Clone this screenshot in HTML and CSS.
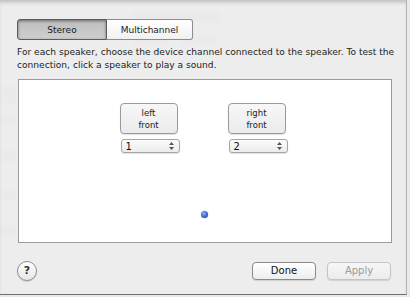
FILE: index.html
```html
<!DOCTYPE html>
<html>
<head>
<meta charset="utf-8">
<link rel="stylesheet" href="styles.css">
</head>
<body>
<div class="window">
  <div class="backdrop" aria-hidden="true">
    <div class="bd bd-title"></div>
    <div class="bd bd-sub"></div>
    <div class="bd bd-sub2"></div>
    <div class="bd bd-left1"></div>
    <div class="bd bd-left2"></div>
    <div class="bd bd-left3"></div>
    <div class="bd bd-left4"></div>
    <div class="bd bd-band"></div>
  </div>
  <div class="sheet">
    <div class="tabs">
      <button class="seg seg-on">Stereo</button>
      <button class="seg">Multichannel</button>
    </div>
    <p class="desc">For each speaker, choose the device channel connected to the speaker. To test the connection, click a speaker to play a sound.</p>
    <div class="panel">
      <div class="speakers">
        <div class="speaker">
          <button class="spk-btn">left<br>front</button>
          <div class="popup"><span>1</span><svg class="arrows" width="5" height="8" viewBox="0 0 5 8"><polygon points="0,3 2.5,0 5,3"/><polygon points="0,5 2.5,8 5,5"/></svg></div>
        </div>
        <div class="speaker">
          <button class="spk-btn">right<br>front</button>
          <div class="popup"><span>2</span><svg class="arrows" width="5" height="8" viewBox="0 0 5 8"><polygon points="0,3 2.5,0 5,3"/><polygon points="0,5 2.5,8 5,5"/></svg></div>
        </div>
      </div>
      <div class="listener"></div>
    </div>
    <div class="footer">
      <button class="help">?</button>
      <div class="actions">
        <button class="btn">Done</button>
        <button class="btn btn-off">Apply</button>
      </div>
    </div>
  </div>
</div>
</body>
</html>
```
FILE: styles.css
```css
* { box-sizing: border-box; }
html, body { margin: 0; padding: 0; }
body {
  width: 410px;
  height: 297px;
  background: #e4e4e4;
  font-family: "DejaVu Sans", Verdana, sans-serif;
  color: #1a1a1a;
  overflow: hidden;
}
.window {
  position: relative;
  width: 410px;
  height: 297px;
  background: #e9e9e9;
}
.backdrop {
  position: absolute;
  inset: 0;
  filter: blur(2px);
  pointer-events: none;
}
.bd { position: absolute; background: rgba(0,0,0,0.07); border-radius: 3px; }
.bd-title { left: 132px; top: 12px; width: 88px; height: 10px; }
.bd-sub { left: 132px; top: 36px; width: 38px; height: 8px; background: rgba(0,0,0,0.05); }
.bd-sub2 { left: 180px; top: 36px; width: 38px; height: 8px; background: rgba(0,0,0,0.05); }
.bd-left1 { left: 0; top: 115px; width: 16px; height: 9px; }
.bd-left2 { left: 0; top: 152px; width: 16px; height: 9px; }
.bd-left3 { left: 0; top: 190px; width: 16px; height: 9px; }
.bd-left4 { left: 0; top: 226px; width: 16px; height: 9px; }
.bd-band { left: 0; top: 86px; width: 18px; height: 18px; background: rgba(0,0,0,0.05); border-radius: 0; }
.sheet {
  position: relative;
  width: 407px;
  height: 295px;
  background: rgba(238,238,238,0.8);
  border-right: 1px solid #b4b4b4;
  border-bottom: 1px solid #6e6e6e;
  box-shadow: inset 0 4px 4px -2px rgba(0,0,0,0.22);
  display: flex;
  flex-direction: column;
  padding: 19px 0 0 17px;
}
.tabs {
  display: flex;
  height: 21px;
}
button {
  font-family: inherit;
  color: inherit;
  margin: 0;
}
.seg {
  height: 21px;
  font-size: 9px;
  border: 1px solid #8c8c8c;
  background: linear-gradient(#ffffff, #f1f1f1);
  padding: 0;
}
.seg:first-child { width: 90px; border-radius: 3px 0 0 3px; }
.seg:last-child { width: 86px; border-left: none; border-radius: 0 3px 3px 0; }
.seg-on {
  background: linear-gradient(#bdbdbd, #cfcfcf);
  border-color: #5c5c5c;
  box-shadow: inset 0 1px 3px rgba(0,0,0,0.45);
}
.desc {
  margin: 6px 0 0 0;
  width: 385px;
  font-size: 9.1px;
  line-height: 12.5px;
  color: #222;
}
.panel {
  margin-top: 8px;
  margin-left: 1px;
  width: 374px;
  height: 164px;
  background: #ffffff;
  border: 1px solid #9c9c9c;
  display: flex;
  flex-direction: column;
  align-items: center;
  padding-top: 23px;
}
.speakers {
  display: flex;
  gap: 48px;
  margin-left: -3px;
}
.speaker {
  display: flex;
  flex-direction: column;
  gap: 5px;
}
.spk-btn {
  width: 58px;
  height: 31px;
  border: 1px solid #9a9a9a;
  border-radius: 4px;
  background: linear-gradient(#f7f7f7, #ebebeb);
  box-shadow: 0 1px 1px rgba(0,0,0,0.12);
  font-size: 8.5px;
  line-height: 12px;
  padding: 0;
  color: #222;
}
.popup {
  width: 59px;
  height: 14px;
  margin-left: 1px;
  border: 1px solid #a5a5a5;
  border-radius: 3px;
  background: linear-gradient(#fbfbfb, #ececec);
  box-shadow: 0 1px 1px rgba(0,0,0,0.12);
  display: flex;
  align-items: center;
  justify-content: space-between;
  padding: 0 5px 0 4px;
  font-size: 10px;
  color: #111;
}
.arrows { fill: #555; }
.listener {
  margin-top: 58px;
  width: 7px;
  height: 7px;
  border-radius: 50%;
  background: radial-gradient(circle at 40% 35%, #8fb0f0, #2c5fc9 60%, #1b3f98);
  box-shadow: 0 0 1px rgba(20,40,120,0.6);
  margin-left: -1px;
}
.footer {
  display: flex;
  align-items: center;
  justify-content: space-between;
  margin-top: 18px;
  width: 374px;
}
.help {
  width: 20px;
  height: 20px;
  border-radius: 50%;
  border: 1px solid #8e8e8e;
  background: linear-gradient(#ffffff, #e6e6e6);
  box-shadow: 0 1px 1px rgba(0,0,0,0.15);
  font-size: 11px;
  font-weight: bold;
  color: #333;
  padding: 0;
  line-height: 18px;
}
.actions {
  display: flex;
  gap: 11px;
  margin-top: -1px;
}
.btn {
  width: 64px;
  height: 18px;
  border: 1px solid #8a8a8a;
  border-radius: 4px;
  background: linear-gradient(#ffffff, #ededed);
  box-shadow: 0 1px 1px rgba(0,0,0,0.12);
  font-size: 10px;
  padding: 0;
  color: #111;
}
.btn-off {
  color: #9a9a9a;
  border-color: #c4c4c4;
  background: linear-gradient(#f6f6f6, #ececec);
}
```
